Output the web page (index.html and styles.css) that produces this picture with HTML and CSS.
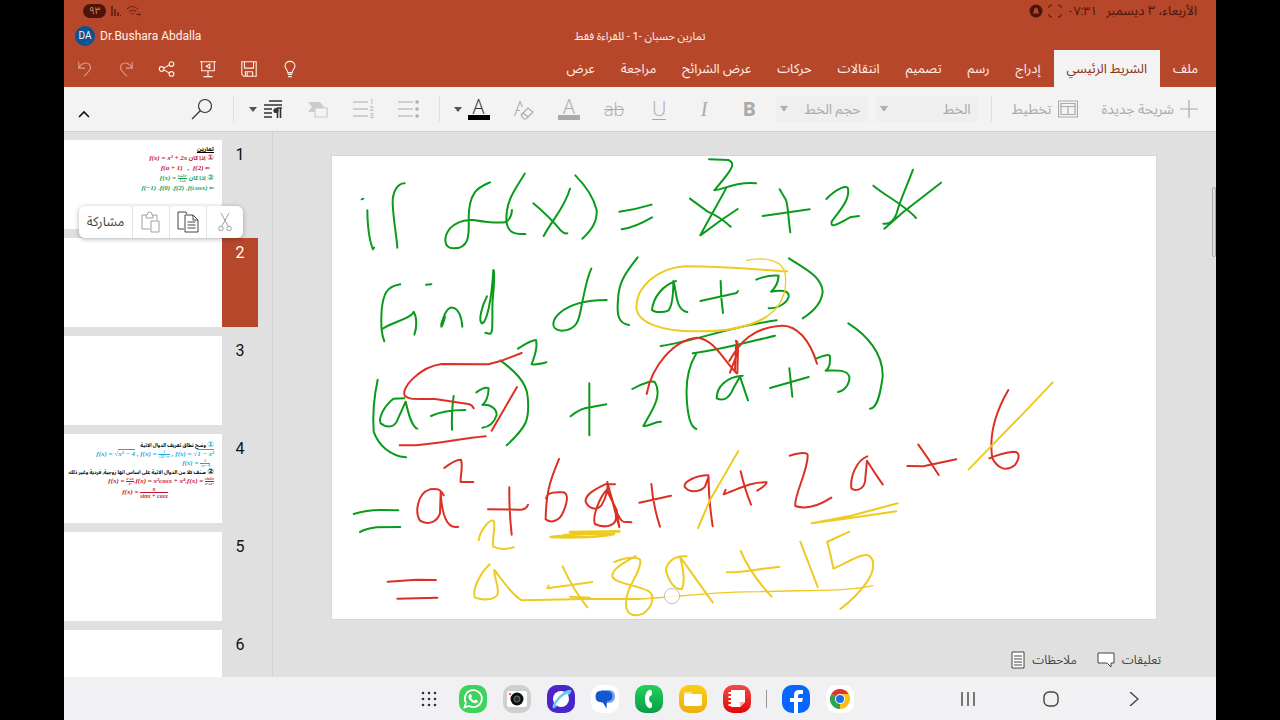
FILE: index.html
```
<!DOCTYPE html>
<html lang="ar" dir="rtl">
<head>
    <meta charset="UTF-8">
    <meta name="viewport" content="width=device-width, initial-scale=1.0">
    <title>تمارين حسبان -1</title>
    <link rel="stylesheet" href="styles.css">
</head>
<body>
    <div class="device">
        <header class="app-header">
            <div class="status-bar">
                <div class="status-group">
                    <span class="date">الأربعاء، ٣ ديسمبر</span>
                    <span>٠٧:٣١</span>
                    <svg width="14" height="14" viewBox="0 0 14 14" fill="none" stroke="currentColor"><path d="M1 4V3q0-2 2-2h1M10 1h1q2 0 2 2v1M13 10v1q0 2-2 2h-1M4 13H3q-2 0-2-2v-1"/></svg>
                    <svg width="14" height="14" viewBox="0 0 14 14"><circle cx="7" cy="7" r="6.500" fill="currentColor"/><path d="M3.500 9.500Q5 8 5 6q0-2.500 2-2.500T9 6q0 2 1.500 3.500z" fill="#b7472a"/></svg>
                </div>
                <div class="status-group" dir="ltr">
                    <span class="battery">٩٣</span>
                    <svg width="10" height="12" viewBox="0 0 10 12" stroke="currentColor" stroke-width="1.300"><path d="M1 1v10M4 4v7M7 7v4M9.500 10v1"/></svg>
                    <svg width="15" height="12" viewBox="0 0 15 12" fill="none" stroke="currentColor" opacity="0.700"><path d="M1 4q5-5 11 0M3 6.500q3.500-3 7 0M5 9q1.500-1.500 3 0M10 9.500h4M12.500 8l2 1.500-2 1.500"/></svg>
                </div>
            </div>

            <div class="title-bar">
                <h1 class="doc-title">تمارين حسبان -1 - للقراءة فقط</h1>
                <div class="account" dir="ltr">
                    <span class="avatar">DA</span>
                    <span>Dr.Bushara Abdalla</span>
                </div>
            </div>

            <div class="tab-bar">
                <nav class="tabs">
                    <button class="tab">ملف</button>
                    <button class="tab active">الشريط الرئيسي</button>
                    <button class="tab">إدراج</button>
                    <button class="tab">رسم</button>
                    <button class="tab">تصميم</button>
                    <button class="tab">انتقالات</button>
                    <button class="tab">حركات</button>
                    <button class="tab">عرض الشرائح</button>
                    <button class="tab">مراجعة</button>
                    <button class="tab">عرض</button>
                </nav>
                <div class="quick-actions" dir="ltr">
                    <button class="quick dim" aria-label="تراجع"><svg viewBox="0 0 20 20"><path d="M3 2v7h7M3 9C6 3 12 2 15 5c3 4 0 7-6 13"/></svg></button>
                    <button class="quick dim" aria-label="إعادة"><svg viewBox="0 0 20 20"><path d="M17 2v7h-7M17 9C14 3 8 2 5 5c-3 4 0 7 6 13"/></svg></button>
                    <button class="quick" aria-label="مشاركة"><svg viewBox="0 0 20 20"><circle cx="4" cy="10" r="2.600"/><circle cx="15" cy="4.500" r="2.600"/><circle cx="15" cy="15.500" r="2.600"/><path d="M6.500 9l6-3.500M6.500 11l6 3.500"/></svg></button>
                    <button class="quick" aria-label="عرض تقديمي"><svg viewBox="0 0 20 20"><path d="M1 2h18M3 2v10h14V2M10 12v7M5 18.500h10M12 4.500v5L8 7z"/></svg></button>
                    <button class="quick" aria-label="حفظ"><svg viewBox="0 0 20 20"><path d="M2 2h16v16H4l-2-2zM5 2v7h10V2M6 18v-5h8v5M8 14v4"/></svg></button>
                    <button class="quick" aria-label="تلميح"><svg viewBox="0 0 20 20"><path d="M7.500 14C7.500 11 4.500 10 4.500 6.500a5.500 5 0 0 1 11 0C15.500 10 12.500 11 12.500 14zM7.500 16h5M8 18.500h4"/></svg></button>
                </div>
            </div>
        </header>

        <div class="toolbar">
            <button class="tool labeled">
                <svg width="18" height="18" viewBox="0 0 18 18"><path d="M9 0v18M0 9h18"/></svg>
                شريحة جديدة
            </button>
            <button class="tool labeled">
                <svg width="20" height="18" viewBox="0 0 20 18"><path d="M.500 1h19v16H.500zM3 3.500h14v3H3zM3 6.500v8h14v-8M10 6.500v8"/></svg>
                تخطيط
            </button>
            <span class="divider"></span>
            <select class="picker font-picker" aria-label="الخط"><option>الخط</option></select>
            <select class="picker size-picker" aria-label="حجم الخط"><option>حجم الخط</option></select>
            <button class="tool"><b class="glyph bold">B</b></button>
            <button class="tool"><i class="glyph italic">I</i></button>
            <button class="tool"><span class="glyph underlined">U</span></button>
            <button class="tool"><s class="glyph strike">ab</s></button>
            <button class="tool"><span class="glyph bar">A</span></button>
            <button class="tool erase" dir="ltr"><span class="glyph">A</span><svg width="14" height="13" viewBox="0 0 14 13"><path d="M1 8l7-7 5 4-7 7H4zM3 6l5 4"/></svg></button>
            <button class="tool split on"><span class="glyph bar">A</span><span class="arrow"></span></button>
            <span class="divider"></span>
            <button class="tool" aria-label="تعداد نقطي"><svg width="21" height="18" viewBox="0 0 21 18"><path d="M0 2h15M0 9h15M0 16h15"/><path d="M17.500 2h3M17.500 9h3M17.500 16h3" stroke-width="3"/></svg></button>
            <button class="tool numbered" aria-label="تعداد رقمي" dir="ltr">
                <svg width="15" height="18" viewBox="0 0 15 18"><path d="M0 2h15M0 9h15M0 16h15"/></svg>
                <span class="digits"><span>1</span><span>2</span><span>3</span></span>
            </button>
            <button class="tool" aria-label="ترتيب"><svg width="20" height="18" viewBox="0 0 20 18"><path d="M0 2h12l4 5-4 5H0l4-5z" fill="#ccc" stroke="none"/><path d="M7 8h12v9H7z" fill="#f4f4f4" stroke="#c8c8c8"/></svg></button>
            <button class="tool split on" aria-label="فقرة">
                <svg width="20" height="20" viewBox="0 0 20 20"><path d="M6 2h13M1 6h18M1 10h8M1 14h8M1 18h8" stroke-width="1.400"/><path d="M14 9h5M14.500 9v10M17.500 9v10" stroke-width="1.600"/><circle cx="13" cy="11.500" r="2.600" fill="currentColor" stroke="none"/></svg>
                <span class="arrow"></span>
            </button>
            <span class="divider"></span>
            <button class="tool on" aria-label="بحث"><svg width="22" height="22" viewBox="0 0 22 22"><circle cx="14" cy="8" r="6.500"/><path d="M9.500 12.500L1 21"/></svg></button>
            <button class="tool collapse" aria-label="طي الشريط"><svg width="12" height="8" viewBox="0 0 12 8"><path d="M1 7l5-5 5 5"/></svg></button>
        </div>

        <main class="workspace">
            <section class="stage">
                <div class="slide">
                    <svg class="ink" viewBox="0 0 2472 1389" role="img" aria-label="الشريحة 2">
                        <!-- if f(x) / find f( -->
                        <g class="green" transform="translate(24 -18)">
                            <path d="M65 148l5-2M82 181Q83 260 99 298l3-5M194 100C170 100 157 130 158 160C160 210 170 260 172 293"/>
                            <path d="M450 97C420 110 385 120 386 210C388 260 385 296 340 295C310 294 310 260 330 235C350 215 370 208 400 210C430 215 460 220 495 217C510 210 515 195 516 180"/>
                            <path d="M554 71C525 120 497 150 499 215C505 250 525 253 556 252M580 160C610 185 640 215 662 241Q672 252 682 250M690 116C675 170 640 205 611 258M706 76C735 105 760 140 770 180C772 215 755 240 727 266"/>
                            <path d="M181 403C140 410 130 430 125 480C122 520 125 555 133 574M130 535C160 515 215 505 221 485C230 500 232 530 223 554M258 404l16-1"/>
                            <path d="M304 530Q302 515 315 500Q308 528 304 530C310 490 325 470 338 473C355 475 365 500 367 530"/>
                            <path d="M441 439C425 470 415 510 425 520C440 520 455 450 460 360C464 360 463 400 458 450C455 500 462 555 448 551L436 548"/>
                            <path d="M754 356C740 385 735 420 726 460C718 500 718 540 665 542C625 538 640 505 660 488C700 455 760 450 800 450M893 322C860 365 835 395 834 450C830 495 835 520 867 525"/>
                        </g>
                        <!-- = x^2 + 2x / a + 3) -->
                        <g class="green" transform="translate(864 -18)">
                            <path d="M-2 185Q50 178 95 164M5 238Q45 232 96 202M267 28L325 30C350 40 335 60 283 121C320 115 350 95 408 100"/>
                            <path d="M210 146L262 184Q300 200 332 230M318 115C295 160 270 200 241 256L304 210L353 177M479 118L498 150C505 170 505 210 511 247M428 198Q500 188 569 178"/>
                            <path d="M619 147C650 115 680 105 684 115C690 150 660 180 635 215C630 235 650 225 690 202L717 198M760 107C800 140 860 170 888 204M879 59C860 110 840 150 830 190Q818 225 790 221M963 98L850 186L793 236"/>
                            <path d="M168 393C130 405 100 440 96 480C105 488 130 488 145 482C160 465 160 420 160 393C170 420 165 480 202 486M241 453L350 429L354 423M302 393Q302 440 309 489"/>
                            <path d="M409 389Q440 375 476 377C475 395 470 410 453 425C480 420 508 420 506 440C500 460 475 475 446 475M507 325C560 360 605 380 608 425C605 460 580 485 548 505M122 588C230 572 330 530 470 511"/>
                        </g>
                        <g class="yellow" transform="translate(864 -18)">
                            <path d="M502 364C420 360 350 350 195 349C110 355 50 410 49 470C50 520 130 545 230 544C330 545 400 525 440 500"/>
                            <path class="thin" d="M440 500C500 460 500 400 495 370C490 335 440 318 380 331"/>
                        </g>
                        <!-- (a+3)^2 + -->
                        <g class="green" transform="translate(24 522)">
                            <path d="M113 149C100 210 97 250 101 305C115 345 150 378 198 382M193 205L160 206C130 230 115 265 122 280C135 292 160 295 170 275L197 215C205 250 215 290 232 296"/>
                            <path d="M273 258C300 245 330 240 376 240M341 198C335 240 335 270 336 299M409 187Q435 168 446 175C445 200 440 215 427 225C450 222 470 235 470 255C460 285 440 292 427 293"/>
                            <path d="M481 91C520 120 560 155 563 200C570 270 560 290 500 346M534 56Q570 32 588 30C595 60 578 90 575 103Q590 105 619 97M692 259Q715 240 735 235L799 223M748 160Q748 250 748 316"/>
                            <path d="M41 552Q80 540 120 540L175 541M60 606Q80 595 110 592L181 591"/>
                        </g>
                        <!-- 2(a+3) -->
                        <g class="green" transform="translate(804 522)">
                            <path d="M278 70C350 62 430 40 525 17M745-20C800 15 850 70 848 140C840 200 830 235 810 236M97 177C130 158 160 150 165 157C190 200 150 250 130 288C150 290 160 275 183 275"/>
                            <path d="M288 72C265 110 258 160 260 200C262 250 268 290 289 297M428 137C380 140 350 170 350 205C365 212 385 212 400 175L420 140Q435 185 444 211M510 174L626 141M568 115L577 200"/>
                            <path d="M648 86Q688 68 690 80C690 100 690 112 677 122C700 122 740 115 748 140C750 160 735 182 714 186"/>
                        </g>
                        <!-- a^2 + 6a -->
                        <g class="red" transform="translate(24 522)">
                            <path d="M545 69L485 92L445 103L305 102C240 110 180 175 195 198C210 210 220 206 285 207L385 222Q397 225 401 235M531 171L455 302M179 346L228 346C300 340 370 325 437 319"/>
                            <path d="M311 496C300 475 290 475 270 478C230 490 225 550 240 572C260 585 290 580 300 550L302 487C305 550 320 600 355 590M313 414Q345 388 363 389C370 410 360 440 362 456L400 456"/>
                            <path d="M444 538L545 539Q560 537 564 524M508 472Q507 540 515 614M657 387C635 440 618 480 617 568C630 580 660 575 670 545C685 510 685 485 665 487C640 485 620 490 618 505"/>
                            <path d="M825 463L795 463C760 480 735 495 737 515C745 535 770 545 785 525C800 500 805 470 802 456L838 592L830 540L800 480C780 500 755 560 765 582C790 595 825 590 828 565C830 540 810 490 802 460C815 510 835 570 850 575L874 577"/>
                            <path d="M143 755L230 749L288 750M172 806L292 803"/>
                        </g>
                        <!-- + 9 + 2a + 6 -->
                        <g class="red" transform="translate(804 522)">
                            <path d="M140 192C155 110 220 30 290 23C340 25 370 90 410 130M388 93C420 35 460-8 545-13C590-15 630 30 651 101M408 32L414 60L412 130M390 128L408 80L412 35M408 50L405 120"/>
                            <path d="M118 518L213 497M154 462Q160 530 180 590M325 436C290 435 250 455 254 470C265 488 300 488 315 470L326 440Q325 500 338 589M377 479L371 493C410 480 450 455 500 457Q500 465 472 482M422 424Q435 480 453 524"/>
                            <path d="M569 377Q620 362 623 375C625 420 580 500 586 528C620 540 660 525 694 503M802 379C770 390 750 440 754 475C765 485 790 480 795 455L801 392Q825 430 848 463"/>
                            <path d="M922 408L970 409L1069 388M955 344Q985 385 1016 435M1225 180C1190 240 1165 310 1177 385C1190 410 1215 430 1245 405C1262 380 1258 365 1240 365Q1200 370 1168 385"/>
                        </g>
                        <!-- a^2 + 8a + 15 -->
                        <g class="yellow" transform="translate(24 522)">
                            <path d="M416 631C420 600 450 565 461 573C468 590 455 630 460 650C475 658 500 658 521 652"/>
                            <path class="thick" d="M838 604L690 606L740 610L632 621C700 625 790 620 822 612C780 608 720 612 670 616L820 606"/>
                            <path d="M449 703C420 730 395 780 405 803C430 812 460 810 472 795C480 770 460 740 463 720C480 740 510 790 545 811L735 807L900 807M626 767L622 775L757 756M668 709Q700 780 742 832M690 800L750 803"/>
                        </g>
                        <g class="yellow" transform="translate(804 522)">
                            <path d="M1358 157L1270 250L1106 418M415 363L330 510L294 594M893 520L750 558L635 580Q750 565 889 544"/>
                            <path d="M43 696C80 680 115 680 121 690C125 730 75 770 78 825C80 860 110 860 130 850C160 830 165 795 145 783C110 765 40 760 37 738C35 715 80 695 107 678"/>
                            <path d="M260 679C220 675 200 700 198 720C205 755 225 778 245 778C260 750 245 700 240 680Q290 750 338 817M380 727C430 728 480 715 538 711M422 663Q450 730 515 800M601 635L653 771"/>
                            <path d="M748 605L681 636C690 660 695 690 700 716C740 700 780 670 805 676C830 690 820 730 800 757Q770 800 721 837"/>
                            <path class="thin" d="M120 807C260 798 350 785 480 785C600 780 750 785 818 767"/>
                        </g>
                        <circle class="pen-cursor" cx="1020" cy="1320" r="23"/>
                    </svg>
                </div>
                <div class="stage-footer">
                    <button class="footer-btn">تعليقات
                        <svg width="18" height="16" viewBox="0 0 18 16"><path d="M1 1h16v10h-3v4l-4-4H1z"/></svg>
                    </button>
                    <button class="footer-btn">ملاحظات
                        <svg width="14" height="18" viewBox="0 0 14 18"><path d="M1 1h12v16H1zM3 5h8M3 8h8M3 11h8M3 14h8"/></svg>
                    </button>
                </div>
                <span class="scroll-thumb"></span>
            </section>

            <aside class="slide-panel">
                <div class="slide-item">
                    <span class="slide-no">1</span>
                    <div class="thumb first">
                        <p><u>تمارين</u></p>
                        <p class="math red-text"><span class="num">①</span> اذا كان <bdi>f(x) = x² + 2x</bdi></p>
                        <p class="math red-text indent">⇐ <bdi>f(a + 1) &nbsp; , &nbsp;f(2)</bdi></p>
                        <p class="math green-text"><span class="num">②</span> اذا كان <bdi>f(x) = <span class="frac"><span>x+2x²</span><span>1+x</span></span></bdi></p>
                        <p class="math green-text">⇐ <bdi>f(−1) .f(0) .f(2) .f(cosx)</bdi></p>
                    </div>
                </div>
                <div class="slide-item selected">
                    <span class="slide-no">2</span>
                    <div class="thumb"></div>
                </div>
                <div class="slide-item">
                    <span class="slide-no">3</span>
                    <div class="thumb"></div>
                </div>
                <div class="slide-item">
                    <span class="slide-no">4</span>
                    <div class="thumb fourth">
                        <p><span class="num blue-text">①</span> وضح نطاق تعريف الدوال الاتية</p>
                        <p class="math blue-text"><bdi>f(x) = √<span class="root">x² − 4</span> , f(x) = <span class="frac"><span>1</span><span>√25−x²</span></span> , f(x) = √<span class="root">1 − x²</span></bdi></p>
                        <p class="math blue-text indent"><bdi>f(x) = <span class="frac"><span>1</span><span>√x²−9</span></span></bdi></p>
                        <p><span class="num">②</span> صنف كلا من الدوال الاتية على اساس انها زوجية, فردية وغير ذلك</p>
                        <p class="math red-text"><bdi>f(x) = <span class="frac"><span>x³+x</span><span>x²</span></span>.f(x) = x²cosx + x⁴.f(x) = <span class="frac"><span>sin2x</span><span>x³+x⁵</span></span></bdi></p>
                        <p class="math red-text last"><bdi>f(x) = <span class="frac big"><span>x</span><span>sinx + cosx</span></span></bdi></p>
                    </div>
                </div>
                <div class="slide-item">
                    <span class="slide-no">5</span>
                    <div class="thumb"></div>
                </div>
                <div class="slide-item">
                    <span class="slide-no">6</span>
                    <div class="thumb"></div>
                </div>
            </aside>

            <div class="context-menu" dir="ltr">
                <button class="menu-text">مشاركة</button>
                <button class="menu-icon" aria-label="لصق"><svg class="dim" width="20" height="22" viewBox="0 0 20 22"><path d="M9 18H1V4h5q0-3 2.500-3T11 4h5v5M5 4v3h7V4M10 10h8v11h-8z"/></svg></button>
                <button class="menu-icon" aria-label="نسخ"><svg width="22" height="22" viewBox="0 0 22 22"><path d="M7 18H1V1h8l1 2M8 4h8l5 5v12H8zM16 4v5h5M10.500 11h8M10.500 14h8M10.500 17h8"/></svg></button>
                <button class="menu-icon" aria-label="قص"><svg class="dim" width="14" height="20" viewBox="0 0 14 20"><path d="M3 1l7 13M11 1L4 14"/><circle cx="3" cy="16.500" r="2.300"/><circle cx="11" cy="16.500" r="2.300"/></svg></button>
            </div>
        </main>

        <footer class="dock" dir="ltr">
            <div class="apps">
                <button class="app" aria-label="التطبيقات"><svg viewBox="0 0 28 28"><g fill="#333"><circle cx="8" cy="8" r="1.300"/><circle cx="14" cy="8" r="1.300"/><circle cx="20" cy="8" r="1.300"/><circle cx="8" cy="14" r="1.300"/><circle cx="14" cy="14" r="1.300"/><circle cx="20" cy="14" r="1.300"/><circle cx="8" cy="20" r="1.300"/><circle cx="14" cy="20" r="1.300"/><circle cx="20" cy="20" r="1.300"/></g></svg></button>
                <button class="app whatsapp" aria-label="واتساب"><svg viewBox="0 0 28 28"><path d="M5.500 22.500l1.400-4.800A8.500 8.500 0 1 1 10.200 21z" fill="none" stroke="#fff" stroke-width="1.800"/><path d="M10.500 9.500q1-1 1.800.2l.7 1.800-1 1.300q1 2 3 3l1.500-1.200 2 1q.8.600 0 1.600-1.500 1.600-4 .5-4-1.700-5-5.200-.2-2 1-3z" fill="#fff"/></svg></button>
                <button class="app camera" aria-label="الكاميرا"><svg viewBox="0 0 28 28"><rect x="4" y="6" width="20" height="16" rx="2" fill="#fff"/><circle cx="14" cy="14" r="6.500" fill="#111"/><circle cx="14" cy="14" r="3" fill="#26313a" stroke="#65727a"/><circle cx="7" cy="9" r="1" fill="#e22"/></svg></button>
                <button class="app internet" aria-label="الإنترنت"><svg viewBox="0 0 28 28"><circle cx="14" cy="14" r="8" fill="#fff"/><path d="M6 23C4 21 9 14 14 9.500S24 4 24.500 5.500 21 11 15 16.500 7.500 24 6 23z" fill="#64c8f5"/><path d="M8.500 19.500Q13 12 20.500 8.500 22 13 19 17q-4 6-10.500 2.500z" fill="#fff"/></svg></button>
                <button class="app messages" aria-label="الرسائل"><svg viewBox="0 0 28 28"><path d="M10 5h8q6 0 6 6.500T18 18h-8z" fill="#77a9f5"/><path d="M9.500 6h6q6 0 6 5t-5.500 5.500l-.5 7-4-6.500h-2Q4.500 17 4.500 11.500T9.500 6z" fill="#1457cf"/></svg></button>
                <button class="app phone" aria-label="الهاتف"><svg viewBox="0 0 28 28"><path d="M14 5q3-1 3 3 0 3-2 3-2 3 0 6 2 0 2 3 0 4-3 3-4-2-4-9t4-9z" fill="#fff"/></svg></button>
                <button class="app files" aria-label="ملفاتي"><svg viewBox="0 0 28 28"><path d="M5 7h7l2 2h9v3H5z" fill="#ffe493"/><rect x="5" y="9" width="18" height="12" rx="2" fill="#fff"/></svg></button>
                <button class="app notes" aria-label="الملاحظات"><svg viewBox="0 0 28 28"><path d="M8 5h14v12l-5 5H8z" fill="#fff"/><path d="M22 17h-5v5z" fill="#ffaaa5"/><path d="M5.500 8h4M5.500 12h4M5.500 16h4M5.500 20h4" stroke="#fff" stroke-width="1.800"/></svg></button>
                <span class="app-divider"></span>
                <button class="app facebook" aria-label="فيسبوك"><svg viewBox="0 0 28 28"><path d="M12 28V17H8v-4h4v-3q0-5 5-5h4v4h-3q-2 0-2 2v2h5l-1 4h-4v11z" fill="#fff"/></svg></button>
                <button class="app chrome" aria-label="كروم"><svg viewBox="0 0 28 28"><path d="M14 14L5.300 9a10 10 0 0 1 17.400 0z" fill="#df382c"/><path d="M14 14l8.700-5A10 10 0 0 1 14 24z" fill="#fbc116"/><path d="M14 14v10A10 10 0 0 1 5.300 9z" fill="#2da44e"/><path d="M14 9h8.700L18.300 16.500 14 24" fill="#fbc116"/><circle cx="14" cy="14" r="5" fill="#fff"/><circle cx="14" cy="14" r="4" fill="#1b6fe8"/></svg></button>
            </div>
            <nav class="system-nav">
                <button aria-label="الأخيرة"><svg width="14" height="14" viewBox="0 0 14 14"><path d="M1 0v14M7 0v14M13 0v14"/></svg></button>
                <button aria-label="الرئيسية"><svg width="16" height="16" viewBox="0 0 16 16"><rect x="1" y="1" width="14" height="14" rx="5"/></svg></button>
                <button aria-label="رجوع"><svg width="10" height="14" viewBox="0 0 10 14"><path d="M1 0l8 7-8 7"/></svg></button>
            </nav>
        </footer>
    </div>
</body>
</html>
```

FILE: styles.css
```
:root {
    --brand: #b7472a;
    --ribbon: #f3f3f3;
    --canvas: #e0e0e0;
    --muted: #aaaaaa;
    --ink-green: #0a9b1c;
    --ink-red: #dc3024;
    --ink-yellow: #efca20;
}

* {
    box-sizing: border-box;
}

body {
    margin: 0;
    background: #000;
    font-family: Roboto, "Noto Sans", "Noto Sans Arabic", "DejaVu Sans", sans-serif;
    font-size: 12px;
}

button {
    padding: 0;
    border: 0;
    background: none;
    color: inherit;
    font: inherit;
    white-space: nowrap;
}

svg {
    display: block;
    flex: none;
}

.device {
    display: flex;
    flex-direction: column;
    height: 100vh;
    margin: 0 5%;
    background: var(--canvas);
}

/* Header */
.app-header {
    background: var(--brand);
    color: #fff0e8;
}

.status-bar {
    display: flex;
    justify-content: space-between;
    align-items: center;
    height: 22px;
    padding: 0 19px;
    color: #4b1509;
}

.status-group {
    display: flex;
    align-items: center;
    gap: 5px;
}

.date {
    margin-left: 4px;
    font-size: 13px;
}

.battery {
    padding: 0 6px;
    border-radius: 8px;
    background: #4b1509;
    color: #d9825f;
    font-size: 10px;
    line-height: 14px;
}

.title-bar {
    display: grid;
    grid-template-columns: 1fr auto 1fr;
    align-items: center;
    height: 28px;
    padding: 0 11px;
}

.doc-title {
    grid-column: 2;
    margin: 0;
    font-size: 11px;
    font-weight: 400;
}

.account {
    display: flex;
    align-items: center;
    gap: 5px;
}

.avatar {
    width: 20px;
    border-radius: 50%;
    background: #0b5394;
    font-size: 10px;
    line-height: 20px;
    text-align: center;
}

.tab-bar {
    display: flex;
    justify-content: space-between;
    height: 37px;
}

.tabs {
    display: flex;
    padding-right: 5px;
}

.tab {
    padding: 0 13px;
    font-size: 13px;
}

.tab.active {
    background: var(--ribbon);
    color: #8c2f18;
}

.quick-actions {
    display: flex;
}

.quick {
    width: 41px;
}

.quick svg {
    width: 18px;
    height: 18px;
    margin: 0 auto;
    fill: none;
    stroke: currentColor;
    stroke-width: 1.2;
}

.dim {
    opacity: 0.5;
}

/* Ribbon */
.toolbar {
    display: flex;
    align-items: center;
    height: 44px;
    padding: 0 18px 0 10px;
    background: var(--ribbon);
    color: var(--muted);
    font-size: 14px;
}

.tool {
    display: flex;
    justify-content: center;
    align-items: center;
    width: 45px;
    height: 32px;
}

.tool svg {
    fill: none;
    stroke: currentColor;
    stroke-width: 1.2;
}

.labeled {
    width: auto;
    gap: 6px;
    margin-left: 24px;
}

.labeled + .divider {
    margin-right: -4px;
    margin-left: 13px;
}

.divider {
    width: 1px;
    height: 26px;
    margin: 0 8px;
    background: #e0e0e0;
}

.picker {
    height: 26px;
    margin-left: 8px;
    padding: 0 7px;
    border: 0;
    appearance: none;
    background-color: #efefef;
    /* two halves of the drop-down triangle */
    background-image: linear-gradient(to bottom left, #b0b0b0 50%, transparent 51%), linear-gradient(to bottom right, #b0b0b0 50%, transparent 51%);
    background-repeat: no-repeat;
    background-position: 4px 10px, 8px 10px;
    background-size: 4px 6px;
    color: var(--muted);
    font: inherit;
}

.font-picker {
    width: 102px;
}

.size-picker {
    width: 92px;
    margin-left: 4px;
}

.glyph {
    font-family: "Open Sans", sans-serif;
    font-size: 20px;
    font-weight: 300;
    line-height: 20px;
}

.bold {
    font-weight: 700;
}

.italic {
    font-family: "Liberation Serif", serif;
    font-weight: 400;
}

.underlined {
    border-bottom: 1px solid;
}

.strike {
    font-size: 18px;
}

.bar {
    width: 22px;
    border-bottom: 5px solid;
    line-height: 16px;
    text-align: center;
}

.erase svg {
    margin: 8px 0 0 -6px;
    background: var(--ribbon);
}

.split {
    width: 48px;
    gap: 6px;
    margin-right: 6px;
}

.on {
    color: #333;
}

.on .bar {
    border-color: #000;
}

.arrow {
    border: 4px solid transparent;
    border-top: 5px solid #555;
    border-bottom: 0;
}

.digits {
    display: flex;
    flex-direction: column;
    margin-left: 2px;
    font-size: 7px;
    line-height: 7px;
}

.collapse {
    width: 20px;
    margin-top: 10px;
    margin-right: auto;
    color: #111;
}

.collapse svg {
    stroke-width: 1.6;
}

/* Workspace */
.workspace {
    position: relative;
    display: flex;
    flex: 1;
    min-height: 0;
    border-top: 1px solid #d0d0d0;
}

.stage {
    position: relative;
    flex: 1;
    padding: 24px 60px 0 59px;
    border-left: 1px solid #d4d4d4;
}

.slide {
    background: #fff;
    outline: 1px solid #d6d6d6;
}

.ink {
    width: 100%;
    height: auto;
    fill: none;
    stroke-width: 6;
    stroke-linecap: round;
    stroke-linejoin: round;
}

.green { stroke: var(--ink-green); }
.red { stroke: var(--ink-red); }
.yellow { stroke: var(--ink-yellow); }
.thin { stroke-width: 4; }
.thick { stroke-width: 8; }

.pen-cursor {
    fill: rgba(255, 255, 255, 0.8);
    stroke: #b9c0cc;
    stroke-width: 3;
}

.stage-footer {
    display: flex;
    gap: 20px;
    padding-top: 31px;
    color: #444;
}

.footer-btn {
    display: flex;
    align-items: center;
    gap: 7px;
    height: 20px;
}

.footer-btn:first-child {
    margin-right: -5px;
}

.footer-btn svg {
    fill: #fff;
    stroke: #444;
}

.scroll-thumb {
    position: absolute;
    top: 55px;
    right: 0;
    width: 4px;
    height: 70px;
    border: 1px solid #aaa;
    border-radius: 2px;
    background: #ddd;
}

/* Slide panel */
.slide-panel {
    display: flex;
    flex-direction: column;
    gap: 9px;
    width: 208px;
    padding: 8px 14px 0 0;
    overflow: hidden;
}

.slide-item {
    display: flex;
    flex: none;
    height: 89px;
}

.slide-no {
    flex: none;
    width: 36px;
    padding-top: 5px;
    color: #111;
    font-size: 16px;
    line-height: 20px;
    text-align: center;
}

.selected .slide-no {
    background: var(--brand);
    color: #fff;
}

.thumb {
    flex: 1;
    min-width: 0;
    padding: 4px 8px;
    background: #fff;
    font-size: 6px;
    font-weight: 700;
    line-height: 9px;
    white-space: nowrap;
}

.thumb p {
    margin: 0;
}

.thumb.fourth {
    padding-top: 7px;
    font-size: 5px;
}

.num {
    font-size: 8px;
    line-height: 8px;
}

.math bdi {
    direction: ltr;
    font-family: "Liberation Serif", serif;
    font-size: 7px;
    font-style: italic;
}

.indent {
    padding-right: 4px;
}

.fourth .last {
    padding-right: 46px;
}

.frac {
    display: inline-flex;
    flex-direction: column;
    font-size: 4px;
    line-height: 4px;
    text-align: center;
    vertical-align: middle;
}

.frac span:first-child {
    border-bottom: 1px solid;
}

.frac.big {
    font-size: 6px;
    line-height: 6px;
}

.root {
    border-top: 1px solid;
}

.red-text { color: #c8102e; }
.green-text { color: #12a060; }
.blue-text { color: #19a9df; }

/* Clipboard menu */
.context-menu {
    position: absolute;
    top: 74px;
    left: 15px;
    display: flex;
    height: 32px;
    border-radius: 6px;
    background: #fff;
    box-shadow: 0 1px 5px rgba(0, 0, 0, 0.3);
    color: #444;
}

.menu-text {
    width: 53px;
    font-size: 13px;
}

.menu-icon {
    width: 37px;
    border-left: 1px solid #e4e4e4;
}

.menu-icon svg {
    margin: 0 auto;
    fill: none;
    stroke: currentColor;
}

/* Dock */
.dock {
    display: grid;
    grid-template-columns: 1fr auto 1fr;
    align-items: center;
    height: 43px;
    background: #f1f1f4;
}

.apps {
    display: flex;
    grid-column: 2;
    align-items: center;
    gap: 16px;
    padding-right: 12px;
}

.app {
    width: 28px;
    height: 28px;
    border-radius: 10px;
    overflow: hidden;
}

.whatsapp { background: #3dd35c; }
.camera { background: #cfcfcf; }
.internet { background: #4b25c9; }
.messages { background: #fff; }
.phone { background: linear-gradient(#20d35b, #0a9b48); }
.files { background: linear-gradient(#fad010, #efae10); }
.notes { background: linear-gradient(#f24a45, #e00808); }
.facebook { background: #0866ff; }
.chrome { background: #fff; }

.app-divider {
    width: 1px;
    height: 18px;
    margin: 0 -1px;
    background: #999;
}

.system-nav {
    display: flex;
    justify-content: flex-end;
    padding-right: 41px;
}

.system-nav button {
    width: 83px;
}

.system-nav svg {
    margin: 0 auto;
    fill: none;
    stroke: #444;
    stroke-width: 1.4;
}
```
